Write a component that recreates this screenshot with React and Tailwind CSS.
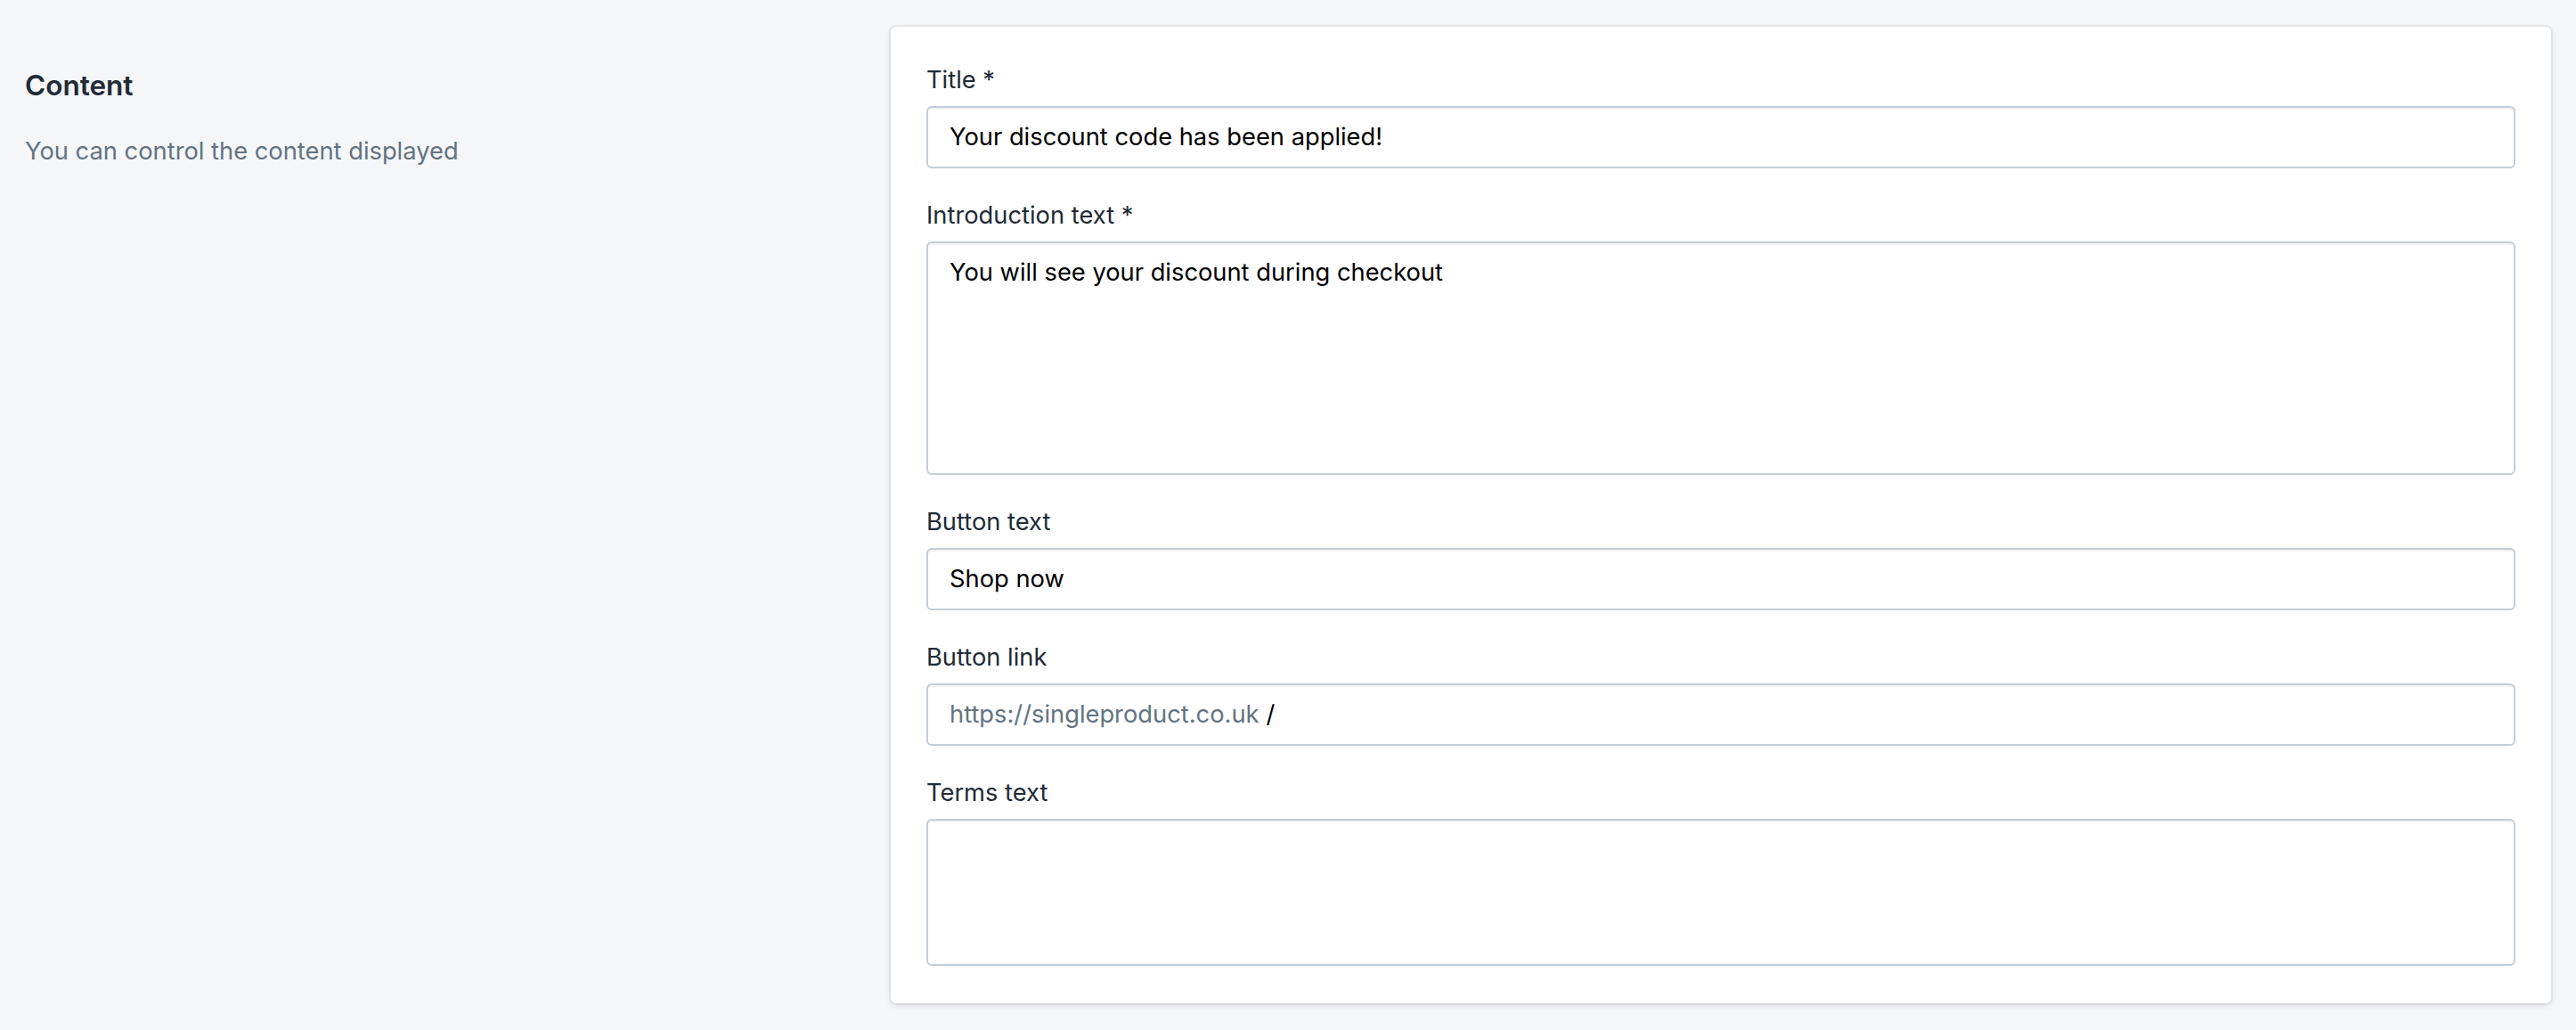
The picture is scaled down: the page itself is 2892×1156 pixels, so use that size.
import React from 'react';

const inputBase =
    'block w-full rounded-[6px] border-2 border-[#c4cdd5] bg-white px-[24px] py-[16px] text-[27.3px] leading-[34px] text-black outline-none shadow-[inset_0_2px_0_0_rgba(22,29,37,0.05)]';

function Field({ label, children }) {
    return (
        <div>
            <label className="block text-[27.3px] leading-[40px] text-[#212b36] mb-[9px]">{label}</label>
            {children}
        </div>
    );
}

export default function App() {
    return (
        <div className="min-h-screen bg-[#f4f6f8] font-['Inter',sans-serif] px-[28px] pt-[30px] pb-[30px]">
            <div className="flex">
                {/* Annotation */}
                <div className="w-[972px] shrink-0 pt-[46px] pr-[32px]">
                    <h2 className="text-[31.5px] leading-[40px] font-semibold text-[#212b36]">Content</h2>
                    <p className="mt-[34px] text-[27.3px] leading-[40px] text-[#637381]">You can control the content displayed</p>
                </div>

                {/* Card */}
                <div className="flex-1 rounded-[6px] bg-white px-[40px] pt-[40px] pb-[42px] shadow-[0_0_0_2px_rgba(63,63,68,0.05),0_2px_6px_0_rgba(63,63,68,0.15)]">
                    <div className="flex flex-col gap-[33px]">
                        <Field label="Title *">
                            <input className={inputBase} readOnly defaultValue="Your discount code has been applied!" />
                        </Field>

                        <Field label="Introduction text *">
                            <textarea
                                className={`${inputBase} h-[262px] resize-none`}
                                readOnly
                                defaultValue="You will see your discount during checkout"
                            />
                        </Field>

                        <Field label="Button text">
                            <input className={inputBase} readOnly defaultValue="Shop now" />
                        </Field>

                        <Field label="Button link">
                            <div className="flex items-center rounded-[6px] border-2 border-[#c4cdd5] bg-white px-[24px] py-[16px] shadow-[inset_0_2px_0_0_rgba(22,29,37,0.05)]">
                                <span className="text-[27.3px] leading-[34px] text-[#637381] mr-[8px] whitespace-nowrap">https://singleproduct.co.uk</span>
                                <input className="flex-1 min-w-0 bg-transparent text-[27.3px] leading-[34px] text-black outline-none" readOnly defaultValue="/" />
                            </div>
                        </Field>

                        <Field label="Terms text">
                            <textarea className={`${inputBase} h-[165px] resize-none`} readOnly defaultValue="" />
                        </Field>
                    </div>
                </div>
            </div>
        </div>
    );
}
